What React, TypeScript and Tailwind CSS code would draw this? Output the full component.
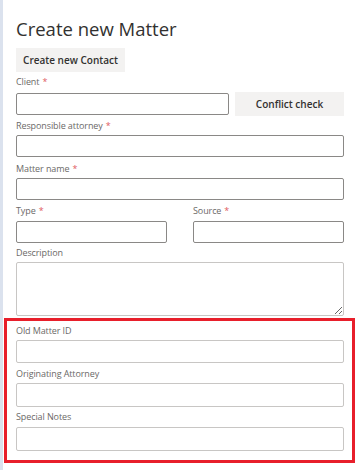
import React from "react";

const font = { fontFamily: '"Open Sans", "Noto Sans", sans-serif' };

function Label({ text, required, className }: { text: string; required?: boolean; className?: string }) {
  return (
    <label className={`block text-[9px] leading-[14px] tracking-[-0.1px] text-[#6b6967] ${className ?? ""}`}>
      {text}
      {required && <span className="ml-[3px] text-[#e05a5f]">*</span>}
    </label>
  );
}

export default function App() {
  return (
    <div className="flex w-[357px] h-[470px] bg-white" style={font}>
      <div className="w-[3px] shrink-0 bg-[#dbe2ee]" />

      <div className="flex flex-1 flex-col">
        <div className="flex flex-col px-[13px]">
          <h1 className="pt-[14px] text-[18.5px] leading-[30px] font-normal text-[#323130]">
            Create new Matter
          </h1>

          <div className="mt-[4px] flex">
            <button className="h-[24px] w-[109px] bg-[#f3f2f1] text-[10px] font-semibold text-[#323130]">
              Create new Contact
            </button>
          </div>

          <Label text="Client" required className="mt-[3px]" />
          <div className="mt-[3px] flex h-[24px] items-center gap-[6px]">
            <input className="h-[22px] flex-1 rounded-[2px] border border-[#8a8886] px-2 text-[11px] outline-none" />
            <button className="h-[24px] w-[109px] bg-[#f3f2f1] text-[10px] font-semibold text-[#323130]">
              Conflict check
            </button>
          </div>

          <Label text="Responsible attorney" required className="mt-[3px]" />
          <input className="mt-[2px] h-[22px] w-full rounded-[2px] border border-[#8a8886] px-2 text-[11px] outline-none" />

          <Label text="Matter name" required className="mt-[5px]" />
          <input className="mt-[2px] h-[22px] w-full rounded-[2px] border border-[#8a8886] px-2 text-[11px] outline-none" />

          <div className="mt-[4px] flex gap-[26px]">
            <div className="flex w-[151px] flex-col">
              <Label text="Type" required />
              <input className="mt-[3px] h-[22px] w-full rounded-[2px] border border-[#8a8886] px-2 text-[11px] outline-none" />
            </div>
            <div className="flex flex-1 flex-col">
              <Label text="Source" required />
              <input className="mt-[3px] h-[22px] w-full rounded-[2px] border border-[#8a8886] px-2 text-[11px] outline-none" />
            </div>
          </div>

          <Label text="Description" className="mt-[3px]" />
          <textarea className="mt-[2px] h-[54px] w-full rounded-[2px] border border-[#c8c6c4] px-2 text-[11px] outline-none" />
        </div>

        <div className="mt-[2px] ml-[1px] mr-[2px] flex flex-col border-[3px] border-[#e81f2b] pl-[9px] pr-[8px] pt-[3px] pb-[9px]">
          <Label text="Old Matter ID" />
          <input className="mt-[2px] h-[23px] w-full rounded-[2px] border border-[#c8c6c4] px-2 text-[11px] outline-none" />

          <Label text="Originating Attorney" className="mt-[4px]" />
          <input className="mt-[2px] h-[24px] w-full rounded-[2px] border border-[#c8c6c4] px-2 text-[11px] outline-none" />

          <Label text="Special Notes" className="mt-[3px]" />
          <input className="mt-[3px] h-[24px] w-full rounded-[2px] border border-[#c8c6c4] px-2 text-[11px] outline-none" />
        </div>
      </div>
    </div>
  );
}
